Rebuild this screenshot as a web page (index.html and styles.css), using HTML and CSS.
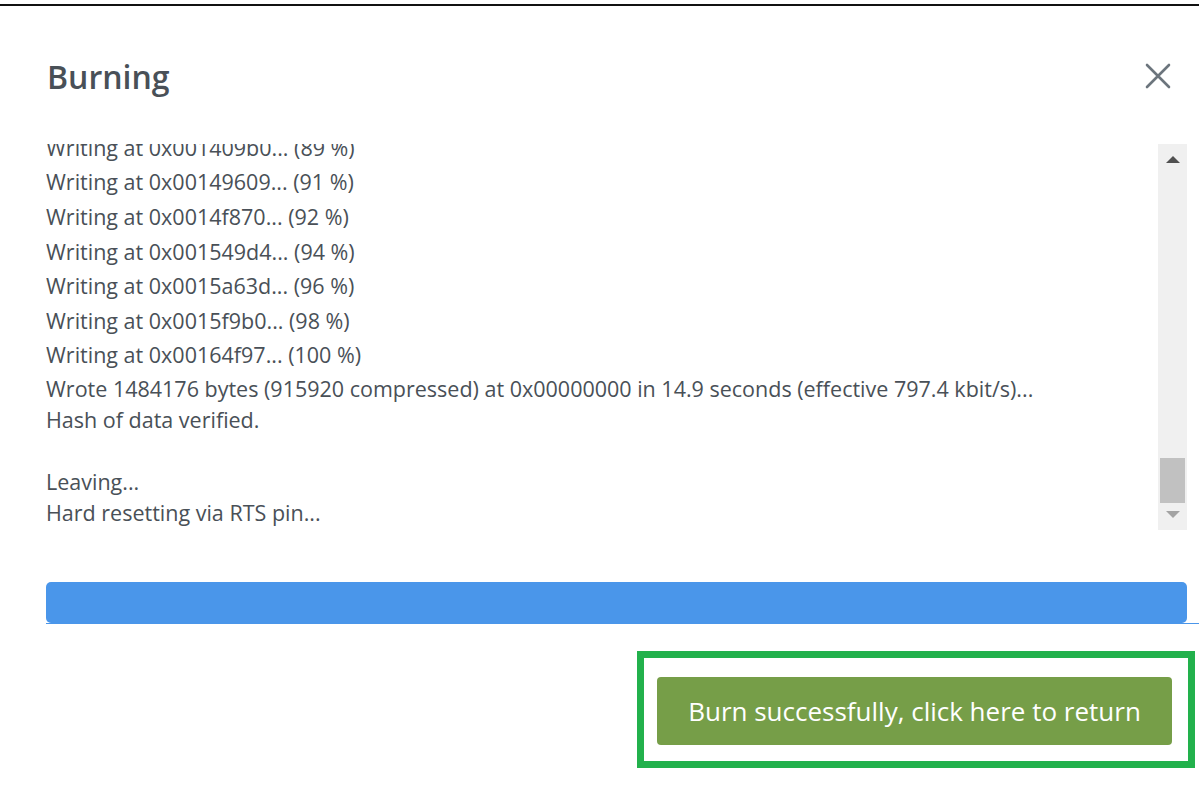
FILE: index.html
```html
<!DOCTYPE html>
<html lang="en">
<head>
    <meta charset="UTF-8">
    <meta name="viewport" content="width=device-width, initial-scale=1.0">
    <title>Burning</title>
    <link rel="stylesheet" href="styles.css">
</head>
<body>
    <div class="backdrop"></div>
    <div class="modal">
        <div class="modal-header">
            <h2>Burning</h2>
            <span class="close">
                <svg width="26" height="26" viewBox="0 0 26 26"><path d="M2 2 L24 24 M24 2 L2 24" stroke="#6c757d" stroke-width="2.6" stroke-linecap="round"/></svg>
            </span>
        </div>
        <div class="log-box">
            <div class="log">
                <div class="log-inner">
                    <p class="line">Writing at 0x001409b0... (89 %)</p>
                    <p class="line">Writing at 0x00149609... (91 %)</p>
                    <p class="line">Writing at 0x0014f870... (92 %)</p>
                    <p class="line">Writing at 0x001549d4... (94 %)</p>
                    <p class="line">Writing at 0x0015a63d... (96 %)</p>
                    <p class="line">Writing at 0x0015f9b0... (98 %)</p>
                    <p class="line">Writing at 0x00164f97... (100 %)</p>
                    <pre class="tail">Wrote 1484176 bytes (915920 compressed) at 0x00000000 in 14.9 seconds (effective 797.4 kbit/s)...
Hash of data verified.

Leaving...
Hard resetting via RTS pin...</pre>
                </div>
            </div>
            <div class="scrollbar">
                <span class="arrow up"></span>
                <span class="track"><span class="thumb"></span></span>
                <span class="arrow down"></span>
            </div>
        </div>
        <div class="progress"><div class="progress-bar"></div></div>
        <div class="modal-footer">
            <div class="highlight">
                <button class="btn-return">Burn successfully, click here to return</button>
            </div>
        </div>
    </div>
</body>
</html>
```

FILE: styles.css
```css
body {
    margin: 0;
    font-family: "Open Sans", "Noto Sans", sans-serif;
    background: #fff;
    color: #495057;
}
.backdrop {
    height: 2px;
    margin-top: 4px;
    background: #111;
}
.modal {
    padding: 0 12px 0 46px;
}
.modal-header {
    display: flex;
    justify-content: space-between;
    align-items: center;
    height: 138px;
    padding-right: 16px;
}
.modal-header h2 {
    margin: 2px 0 0 1px;
    font-size: 32px;
    font-weight: 600;
    color: #495057;
}
.close {
    display: flex;
    margin-top: 2px;
}
.log-box {
    display: flex;
    height: 386px;
}
.log {
    flex: 1;
    overflow: hidden;
    display: flex;
    flex-direction: column;
    justify-content: flex-end;
    padding-bottom: 2px;
}
.line {
    margin: 0;
    height: 34.6px;
    line-height: 34.6px;
    font-size: 21.5px;
}
.tail {
    margin: 0;
    font-family: inherit;
    font-size: 21.5px;
    line-height: 31px;
    white-space: pre;
}
.scrollbar {
    width: 29px;
    background: #f0f0f0;
    display: flex;
    flex-direction: column;
    align-items: center;
}
.arrow {
    width: 0;
    height: 0;
    border-left: 7px solid transparent;
    border-right: 7px solid transparent;
}
.arrow.up {
    margin-top: 12px;
    border-bottom: 7px solid #505050;
}
.arrow.down {
    margin-bottom: 12px;
    border-top: 7px solid #a3a3a3;
}
.track {
    flex: 1;
    width: 100%;
    display: flex;
    flex-direction: column;
    justify-content: flex-end;
    align-items: center;
    padding-bottom: 8px;
}
.thumb {
    width: 25px;
    height: 45px;
    background: #c1c1c1;
}
.progress {
    margin-top: 52px;
    height: 41px;
    border-bottom: 1px solid #4a96ea;
    margin-right: -12px;
}
.progress-bar {
    height: 41px;
    margin-right: 12px;
    background: #4a96ea;
    border-radius: 5px;
}
.modal-footer {
    display: flex;
    justify-content: flex-end;
    padding-top: 27px;
    margin-right: -8px;
}
.highlight {
    border: 7px solid #22b14c;
    padding: 19px 16px 16px 13px;
}
.btn-return {
    width: 515px;
    height: 68px;
    border: none;
    border-radius: 4px;
    background: #769e48;
    color: #fff;
    font-family: inherit;
    font-size: 26px;
    cursor: pointer;
}
```
